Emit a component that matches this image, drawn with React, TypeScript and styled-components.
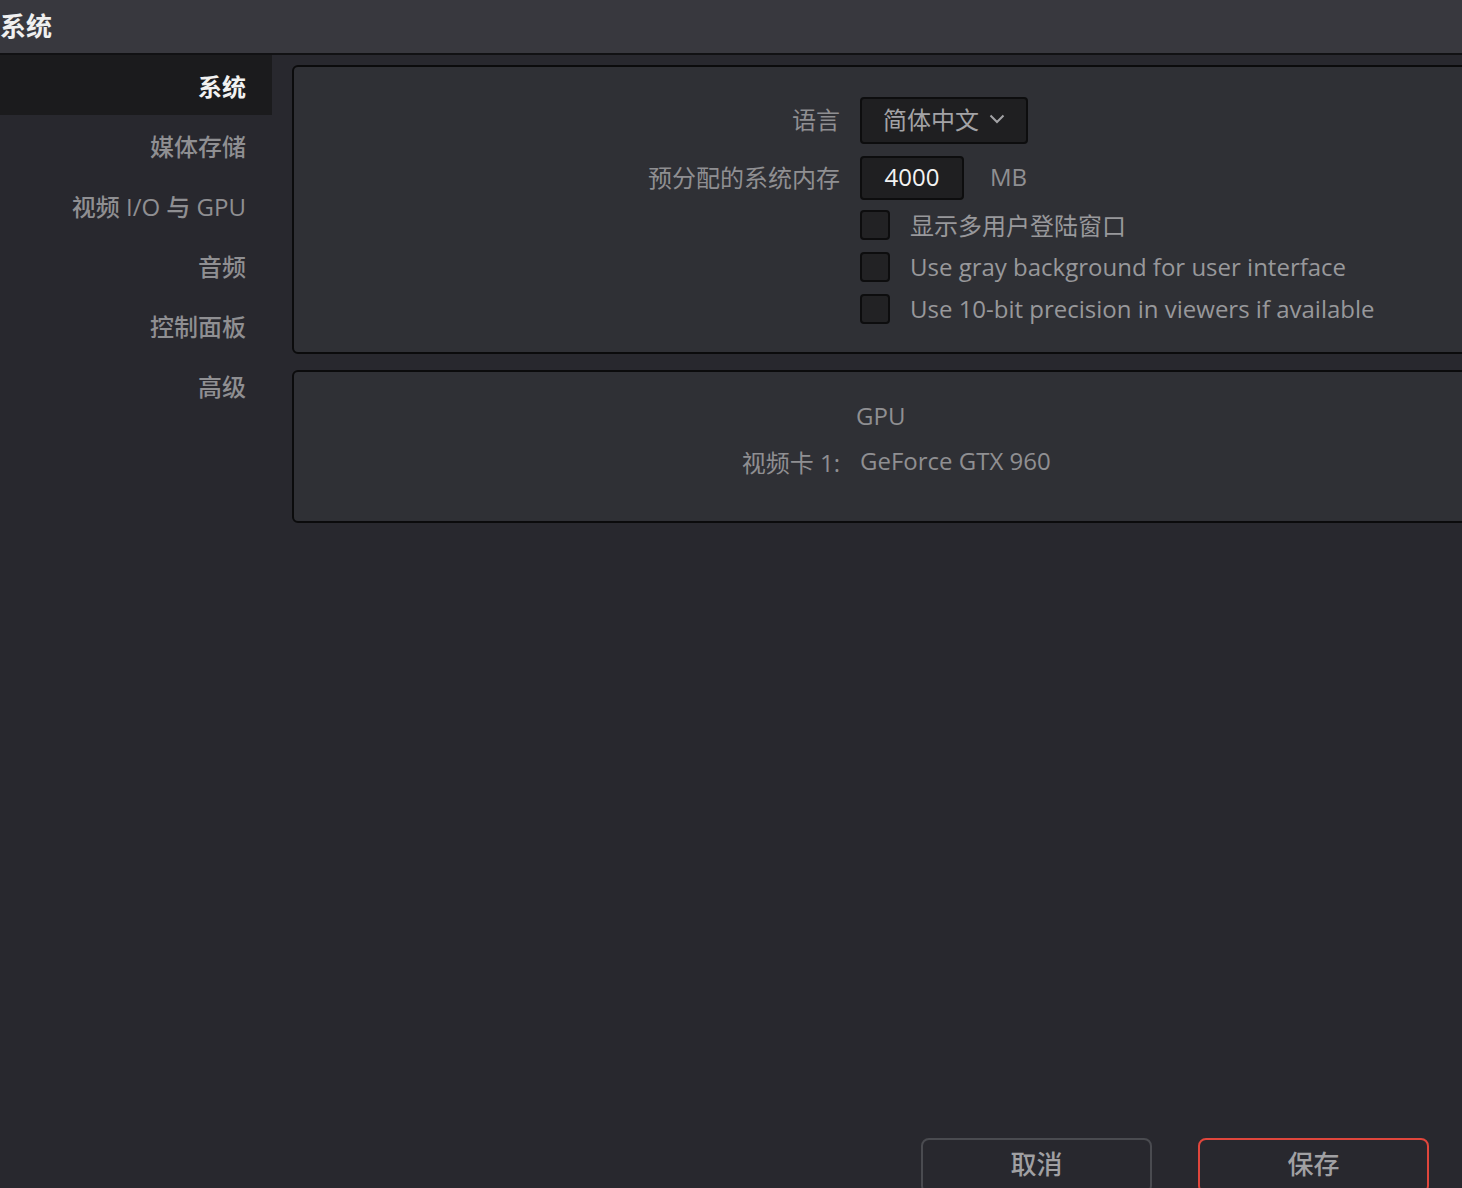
import styled, { createGlobalStyle } from 'styled-components';

const GlobalStyle = createGlobalStyle`
  html, body {
    margin: 0;
    padding: 0;
    overflow: hidden;
    background: #28282e;
  }
  * {
    box-sizing: border-box;
  }
`;

const FONT = `"Open Sans", "Noto Sans CJK SC", sans-serif`;

const Window = styled.div`
  height: 1194px;
  display: flex;
  flex-direction: column;
  background: #28282e;
  font-family: ${FONT};
  color: #8f8f92;
  overflow: hidden;
`;

const TitleBar = styled.div`
  height: 55px;
  flex-shrink: 0;
  background: #38383e;
  border-bottom: 2px solid #111113;
  display: flex;
  align-items: center;
  padding-bottom: 4px;
  font-size: 26px;
  font-weight: 700;
  color: #f0f0f0;
`;

const Body = styled.div`
  flex: 1;
  display: flex;
  min-height: 0;
`;

const Sidebar = styled.nav`
  width: 272px;
  flex-shrink: 0;
  display: flex;
  flex-direction: column;
`;

const NavItem = styled.div<{ $active?: boolean }>`
  height: 60px;
  display: flex;
  align-items: center;
  justify-content: flex-end;
  padding-right: 26px;
  font-size: 24px;
  font-weight: ${({ $active }) => ($active ? 700 : 500)};
  color: ${({ $active }) => ($active ? '#f2f2f2' : '#8f8f92')};
  background: ${({ $active }) => ($active ? '#1b1b1d' : 'transparent')};
`;

const Content = styled.main`
  flex: 1;
  display: flex;
  flex-direction: column;
  padding: 10px 0 0 20px;
  overflow: hidden;
`;

const Panel = styled.section<{ $height: number }>`
  width: 1240px;
  flex-shrink: 0;
  height: ${({ $height }) => $height}px;
  background: #2f3035;
  border: 2px solid #0b0b0c;
  border-radius: 6px;
  margin-bottom: 16px;
`;

const FormGrid = styled.div`
  display: grid;
  grid-template-columns: 546px 1fr;
  column-gap: 20px;
  align-items: center;
  padding-top: 30px;
`;

const Label = styled.div<{ $spaced?: boolean }>`
  font-size: 24px;
  text-align: right;
  color: #8f8f92;
  white-space: nowrap;
  margin-bottom: ${({ $spaced }) => ($spaced ? 16 : 4)}px;
`;

const Cell = styled.div`
  display: flex;
  align-items: center;
`;

const Select = styled.div`
  width: 168px;
  height: 47px;
  margin-bottom: 12px;
  padding-bottom: 4px;
  display: flex;
  align-items: center;
  justify-content: center;
  gap: 10px;
  background: #1f1f21;
  border: 2px solid #0d0d0e;
  border-radius: 4px;
  font-size: 24px;
  color: #a3a3a6;
`;

const NumberBox = styled.div`
  width: 104px;
  height: 44px;
  padding-bottom: 4px;
  display: flex;
  align-items: center;
  justify-content: center;
  background: #1f1f21;
  border: 2px solid #0d0d0e;
  border-radius: 4px;
  font-size: 24px;
  color: #f2f2f2;
`;

const Unit = styled.span`
  font-size: 24px;
  color: #8f8f92;
  margin-left: 26px;
  margin-bottom: 4px;
`;

const CheckList = styled.div`
  grid-column: 2;
  display: flex;
  flex-direction: column;
  gap: 12px;
  margin-top: 10px;
`;

const CheckRow = styled.label`
  display: flex;
  align-items: center;
  gap: 20px;
  height: 30px;
  font-size: 24px;
  color: #98989b;
  white-space: nowrap;
`;

const CheckText = styled.span`
  margin-bottom: 2px;
`;

const CheckBox = styled.span`
  width: 30px;
  height: 30px;
  flex-shrink: 0;
  background: #222224;
  border: 2px solid #0d0d0e;
  border-radius: 4px;
`;

const GpuGrid = styled.div`
  display: grid;
  grid-template-columns: 546px 1fr;
  column-gap: 20px;
  row-gap: 12px;
  padding-top: 27px;
  font-size: 24px;
`;

const GpuTitle = styled.div`
  grid-column: 1 / 3;
  padding-left: 562px;
  color: #8f8f92;
`;

const Value = styled.div`
  color: #8f8f92;
`;

const Footer = styled.div`
  margin-top: auto;
  display: flex;
  justify-content: flex-end;
  gap: 46px;
  padding-right: 33px;
`;

const Button = styled.button<{ $primary?: boolean }>`
  width: 231px;
  height: 56px;
  background: transparent;
  border: 2px solid ${({ $primary }) => ($primary ? '#e0463c' : '#4a4b50')};
  border-radius: 8px;
  font-family: ${FONT};
  font-size: 26px;
  font-weight: 500;
  color: #a0a0a3;
  padding-bottom: 8px;
`;

const Chevron = () => (
  <svg width="16" height="10" viewBox="0 0 16 10">
    <polyline points="1.5,1.5 8,8 14.5,1.5" fill="none" stroke="#a3a3a6" strokeWidth="2" />
  </svg>
);

const navItems = ['系统', '媒体存储', '视频 I/O 与 GPU', '音频', '控制面板', '高级'];

const options = [
  '显示多用户登陆窗口',
  'Use gray background for user interface',
  'Use 10-bit precision in viewers if available',
];

export default function App() {
  return (
    <Window>
      <GlobalStyle />
      <TitleBar>系统</TitleBar>
      <Body>
        <Sidebar>
          {navItems.map((item, i) => (
            <NavItem key={item} $active={i === 0}>
              {item}
            </NavItem>
          ))}
        </Sidebar>
        <Content>
          <Panel $height={289}>
            <FormGrid>
              <Label $spaced>语言</Label>
              <Cell>
                <Select>
                  简体中文
                  <Chevron />
                </Select>
              </Cell>
              <Label>预分配的系统内存</Label>
              <Cell>
                <NumberBox>4000</NumberBox>
                <Unit>MB</Unit>
              </Cell>
              <CheckList>
                {options.map((text) => (
                  <CheckRow key={text}>
                    <CheckBox />
                    <CheckText>{text}</CheckText>
                  </CheckRow>
                ))}
              </CheckList>
            </FormGrid>
          </Panel>
          <Panel $height={153}>
            <GpuGrid>
              <GpuTitle>GPU</GpuTitle>
              <Label>视频卡 1:</Label>
              <Value>GeForce GTX 960</Value>
            </GpuGrid>
          </Panel>
          <Footer>
            <Button>取消</Button>
            <Button $primary>保存</Button>
          </Footer>
        </Content>
      </Body>
    </Window>
  );
}
